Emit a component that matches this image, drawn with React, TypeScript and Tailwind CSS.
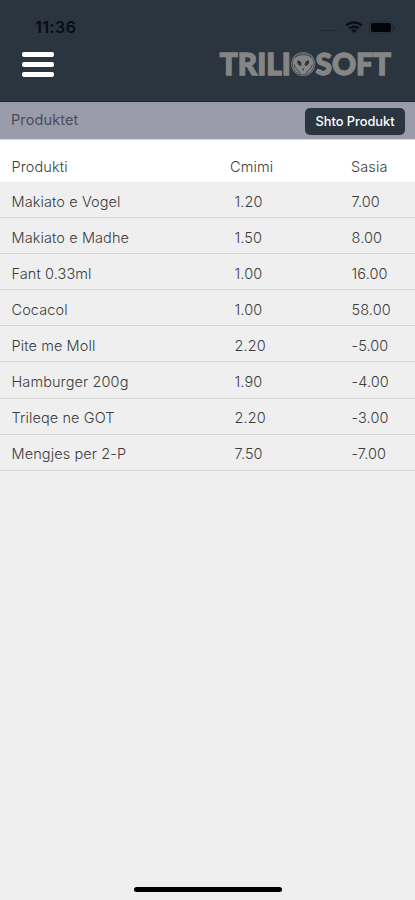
import React from "react";

const products = [
  { name: "Makiato e Vogel", price: "1.20", stock: "7.00" },
  { name: "Makiato e Madhe", price: "1.50", stock: "8.00" },
  { name: "Fant 0.33ml", price: "1.00", stock: "16.00" },
  { name: "Cocacol", price: "1.00", stock: "58.00" },
  { name: "Pite me Moll", price: "2.20", stock: "-5.00" },
  { name: "Hamburger 200g", price: "1.90", stock: "-4.00" },
  { name: "Trileqe ne GOT", price: "2.20", stock: "-3.00" },
  { name: "Mengjes per 2-P", price: "7.50", stock: "-7.00" }
];

function StatusBar() {
  return (
    <div className="flex h-[46px] items-start justify-between pl-[35px] pr-[19px] pt-[17px] text-[#070e16]">
      <span className="text-[16.5px] font-semibold leading-5 tracking-[0.2px]">11:36</span>
      <div className="flex h-5 items-center">
        <div className="mr-[7px] mt-[7px] w-[17px] border-t border-dotted border-[#151f29]" />
        <svg width="18" height="14" viewBox="0 0 18 14" fill="none" stroke="currentColor" strokeWidth="2.3">
          <path d="M1.4 5.4a11 11 0 0 1 15.2 0" />
          <path d="M4.4 8.4a6.6 6.6 0 0 1 9.2 0" />
          <path d="M9 13 6.3 10.4a4 4 0 0 1 5.4 0Z" fill="currentColor" stroke="none" />
        </svg>
        <svg className="ml-[6px]" width="27" height="13" viewBox="0 0 27 13">
          <rect x=".5" y=".5" width="23" height="12" rx="3.5" fill="none" stroke="#222d37" />
          <rect x="2" y="2" width="20" height="9" rx="2" fill="#02060a" />
          <path d="M25 4.5v4c1.8-.6 1.8-3.4 0-4Z" fill="#1a242e" />
        </svg>
      </div>
    </div>
  );
}

function Logo() {
  return (
    <svg width="178" height="40" viewBox="0 -5 178 40" fill="#858585" className="font-['Lato'] text-[30px] font-black">
      <g stroke="#858585" strokeWidth="1.3">
        <text x="0.8" y="26" textLength="71" lengthAdjust="spacingAndGlyphs">TRILI</text>
        <text x="96.5" y="26" textLength="75.5" lengthAdjust="spacingAndGlyphs">SOFT</text>
      </g>
      <circle cx="84.2" cy="15" r="12" />
      <circle cx="84.2" cy="15" r="11" fill="none" stroke="#2b353f" strokeWidth=".7" />
      <g fill="#2b353f">
        <path d="M78.4 11.6c2.5-.6 4.6 1.6 4.2 5.2-2.8.2-5-1.7-4.2-5.2Z" />
        <path d="M90 11.6c-2.5-.6-4.6 1.6-4.2 5.2 2.8.2 5-1.7 4.2-5.2Z" />
        <path d="m83.2 20.6 1-1.5 1 1.5-1 .8Z" />
      </g>
      <path
        d="M76 8.6c4-3.8 12.4-3.8 16.4 0M75.2 15.5c.4 4.8 4.5 5.1 6 9M93.2 15.5c-.4 4.8-4.5 5.1-6 9"
        fill="none"
        stroke="#2b353f"
        strokeWidth=".8"
      />
    </svg>
  );
}

function App() {
  return (
    <div className="flex h-[900px] w-[415px] flex-col bg-[#efefef] font-['Inter',sans-serif] text-[#3c3c3c]">
      <header className="h-[102px] border-b border-[#1e2832] bg-[#2b353f]">
        <StatusBar />
        <div className="flex items-start justify-between pl-[21.5px] pr-[18px]">
          <button className="mt-[5.5px] flex flex-col gap-[5px]" aria-label="Menu">
            <span className="h-[5px] w-[32.5px] rounded-[2px] bg-white" />
            <span className="h-[5px] w-[32.5px] rounded-[2px] bg-white" />
            <span className="h-[5px] w-[32.5px] rounded-[2px] bg-white" />
          </button>
          <div className="-mt-[2px]">
            <Logo />
          </div>
        </div>
      </header>

      <div className="flex h-[38px] items-start justify-between border-b border-[#d9d9e6] bg-[#999bab] pl-[11px] pr-[10px] pt-[6px]">
        <span className="mt-[2px] text-[14.5px] leading-5 tracking-[0.1px] text-[#4b4d59]">Produktet</span>
        <button className="flex h-[27px] w-[100px] items-center justify-center rounded-[5px] bg-[#2b353f] text-[12.8px] font-medium text-white">
          Shto Produkt
        </button>
      </div>

      <div className="flex h-[42px] items-end bg-white pb-[5px] pl-[11.5px] text-[14.5px] font-light leading-5 tracking-[0.1px]">
        <div className="w-[218.5px]">Produkti</div>
        <div className="w-[121px]">Cmimi</div>
        <div>Sasia</div>
      </div>

      {products.map((product) => (
        <div
          key={product.name}
          className="flex h-[36.1px] items-center border-b border-[#d5d5d5] pl-[11.5px] pt-1 text-[14.5px] font-light tracking-[0.1px]"
        >
          <div className="w-[223px]">{product.name}</div>
          <div className="w-[117px]">{product.price}</div>
          <div>{product.stock}</div>
        </div>
      ))}

      <div className="mx-auto mb-2 mt-auto h-[5px] w-[148px] rounded-full bg-black" />
    </div>
  );
}

export default App;
